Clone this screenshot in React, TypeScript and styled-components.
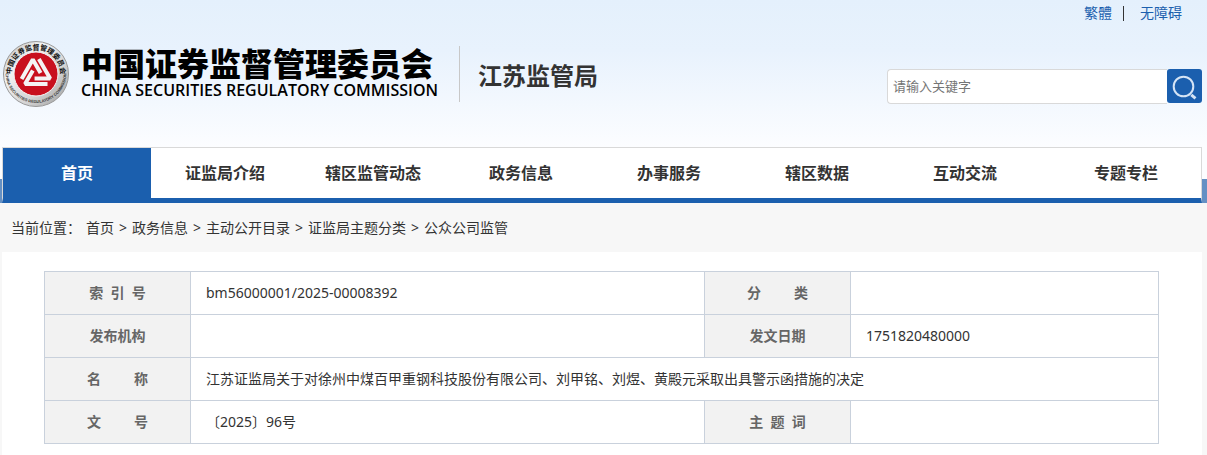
import React from "react";
import styled, { createGlobalStyle } from "styled-components";

const Global = createGlobalStyle`
  * { box-sizing: border-box; }
  body {
    margin: 0;
    background: #f7f7f7;
    color: #333;
    font: 14px/20px "Noto Sans", "Noto Sans CJK SC", sans-serif;
  }
  a { color: inherit; text-decoration: none; }
`;

const Header = styled.header`
  background: linear-gradient(#e4f0fc 0, #e8f2fd 50px, #fcfdff 147px);
`;
const Container = styled.div`
  max-width: 1207px;
  margin: 0 auto;
  padding: 0 5px 0 2px;
`;
const TopLinks = styled.div`
  display: flex;
  justify-content: flex-end;
  gap: 11px;
  padding: 3px 20px 0 0;
  color: #333;
  a { color: #1b5fae; }
`;
const Divider = styled.span`
  width: 1px;
  height: 15px;
  margin: 3px 5px 0 0;
  background: #333;
`;
const Brand = styled.div`
  display: flex;
  align-items: center;
  height: 68px;
  margin: 17px 0 39px;
`;
const Emblem = styled.svg`
  width: 68px;
  height: 68px;
  flex: none;
`;
const Names = styled.div`
  margin-left: 11px;
  width: 358px;
  color: #000;
  white-space: nowrap;
`;
const NameZh = styled.div`
  margin-bottom: 4px;
  font: 900 32px/28px "Noto Sans CJK SC", sans-serif;
`;
const NameEn = styled.div`
  font: 600 16px/20px "Open Sans", sans-serif;
`;
const Bureau = styled.h1`
  margin: 0 0 0 20px;
  padding: 4px 0 0 18px;
  border-left: 1px solid #c8c8c8;
  font-size: 24px;
  line-height: 52px;
  font-weight: 700;
  white-space: nowrap;
`;
const Search = styled.form`
  display: flex;
  width: 315px;
  height: 35px;
  margin: 24px 0 0 auto;
`;
const Keyword = styled.input`
  flex: 1;
  min-width: 0;
  padding: 0 5px;
  border: 1px solid #d9d9d9;
  border-right: 0;
  border-radius: 4px 0 0 4px;
  background: #fff;
  font: 13px/20px "Noto Sans", "Noto Sans CJK SC", sans-serif;
  &::placeholder { color: #757575; opacity: 1; }
`;
const SearchButton = styled.button`
  width: 35px;
  height: 34px;
  padding: 0;
  border: 0;
  border-radius: 3px;
  background: #1b5fae;
  svg { display: block; }
`;

const NavBand = styled.div`
  background: linear-gradient(transparent 32px, #6490c4 32px);
`;
const Nav = styled.nav`
  display: flex;
  border: 1px solid #d9d9d9;
  border-bottom: 5px solid #1b5fae;
  background: #fff;
`;
const NavItem = styled.a<{ $active?: boolean }>`
  flex: 148 1 0;
  line-height: 50px;
  font-size: 16px;
  font-weight: 700;
  text-align: center;
  color: ${(p) => (p.$active ? "#fff" : "#333")};
  background: ${(p) => (p.$active ? "#1b5fae" : "#fff")};
  &:last-child { flex-grow: 150; padding-left: 12px; }
`;

const Crumbs = styled.nav`
  display: flex;
  gap: 5px;
  padding: 15px 9px 14px;
`;
const Panel = styled.main`
  padding: 19px 43px 28px 42px;
  background: #fff;
`;
const Info = styled.table`
  width: 100%;
  table-layout: fixed;
  border-collapse: collapse;
  th, td { height: 43px; border: 1px solid #c9d1dc; }
  th { padding: 0; background: #f2f2f2; color: #666; font-weight: 700; white-space: pre; }
  td { padding: 0 15px; }
`;

const navItems = ["首页", "证监局介绍", "辖区监管动态", "政务信息", "办事服务", "辖区数据", "互动交流", "专题专栏"];
const crumbs = ["首页", "政务信息", "主动公开目录", "证监局主题分类", "公众公司监管"];

function Seal() {
  return (
    <Emblem viewBox="0 0 68 68" role="img" aria-label="中国证券监督管理委员会">
      <defs>
        <linearGradient id="silver" x1="0" y1="0" x2="1" y2="1">
          <stop offset="0" stopColor="#b4b4b4" />
          <stop offset="0.3" stopColor="#f2f2f2" />
          <stop offset="0.65" stopColor="#d4d4d4" />
          <stop offset="1" stopColor="#999" />
        </linearGradient>
        <path id="upper" d="M9.5 34 A24.5 24.5 0 0 1 58.5 34" />
        <path id="lower" d="M4 27 A30.5 30.5 0 1 0 64 27" />
      </defs>
      <circle cx="34" cy="34" r="32.5" fill="url(#silver)" stroke="#999" />
      <circle cx="34" cy="34" r="22" fill="#c8101e" stroke="#f4f4f4" />
      <text fontFamily="Noto Sans CJK SC" fontSize="7" fontWeight="700" fill="#111">
        <textPath href="#upper" startOffset="50%" textAnchor="middle">中国证券监督管理委员会</textPath>
      </text>
      <text fontFamily="Liberation Sans" fontSize="4" fontWeight="700" fill="#333">
        <textPath href="#lower" startOffset="50%" textAnchor="middle">CHINA SECURITIES REGULATORY COMMISSION</textPath>
      </text>
      <g fill="none" stroke="#f4f4f4" strokeWidth="4" strokeLinejoin="bevel">
        <path d="M19.6 39 L30.8 19.5 L38.6 33" />
        <path d="M19.6 39 L30.8 19.5 L38.6 33" transform="rotate(120 34 34)" />
        <path d="M19.6 39 L30.8 19.5 L38.6 33" transform="rotate(240 34 34)" />
      </g>
    </Emblem>
  );
}

export default function App() {
  return (
    <>
      <Global />
      <Header>
        <Container>
          <TopLinks>
            <a href="#traditional">繁體</a>
            <Divider />
            <a href="#accessible">无障碍</a>
          </TopLinks>
          <Brand>
            <Seal />
            <Names>
              <NameZh>中国证券监督管理委员会</NameZh>
              <NameEn>CHINA SECURITIES REGULATORY COMMISSION</NameEn>
            </Names>
            <Bureau>江苏监管局</Bureau>
            <Search>
              <Keyword type="text" placeholder="请输入关键字" aria-label="请输入关键字" />
              <SearchButton type="button" aria-label="搜索">
                <svg width="35" height="34" viewBox="0 0 35 34" fill="none" stroke="#d5e4f5">
                  <circle cx="16.5" cy="17.5" r="9.8" strokeWidth="2" />
                  <path d="M24.3 25.8 L28.5 29.3" strokeWidth="3" />
                </svg>
              </SearchButton>
            </Search>
          </Brand>
        </Container>
        <NavBand>
          <Container>
            <Nav>
              {navItems.map((t, i) => (
                <NavItem key={t} href={`#nav${i}`} $active={i === 0}>{t}</NavItem>
              ))}
            </Nav>
          </Container>
        </NavBand>
      </Header>
      <Container>
        <Crumbs>
          <span>当前位置：</span>
          {crumbs.map((t, i) => (
            <React.Fragment key={t}>
              {i > 0 && <span>&gt;</span>}
              <a href={`#crumb${i}`}>{t}</a>
            </React.Fragment>
          ))}
        </Crumbs>
        <Panel>
          <Info>
            <colgroup>
              <col style={{ width: 146 }} />
              <col />
              <col style={{ width: 146 }} />
              <col style={{ width: 308 }} />
            </colgroup>
            <tbody>
              <tr>
                <th scope="row">索&nbsp; 引&nbsp; 号</th>
                <td>bm56000001/2025-00008392</td>
                <th scope="row">分{"\u00a0".repeat(9)}类</th>
                <td />
              </tr>
              <tr>
                <th scope="row">发布机构</th>
                <td />
                <th scope="row">发文日期</th>
                <td>1751820480000</td>
              </tr>
              <tr>
                <th scope="row">名{"\u00a0".repeat(9)}称</th>
                <td colSpan={3}>江苏证监局关于对徐州中煤百甲重钢科技股份有限公司、刘甲铭、刘煜、黄殿元采取出具警示函措施的决定</td>
              </tr>
              <tr>
                <th scope="row">文{"\u00a0".repeat(9)}号</th>
                <td>〔2025〕96号</td>
                <th scope="row">主&nbsp; 题&nbsp; 词</th>
                <td />
              </tr>
            </tbody>
          </Info>
        </Panel>
      </Container>
    </>
  );
}
